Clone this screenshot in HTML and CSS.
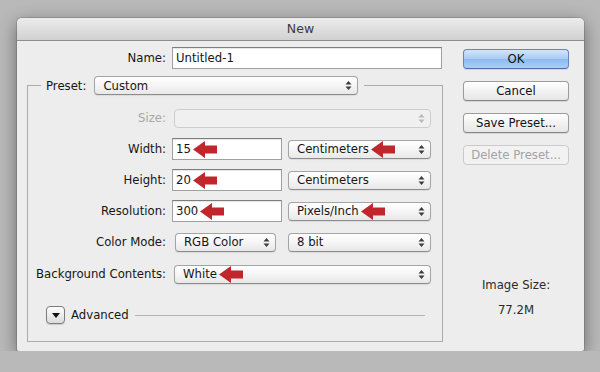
FILE: index.html
```html
<!DOCTYPE html>
<html>
<head>
    <meta charset="utf-8">
    <meta name="viewport" content="width=device-width, initial-scale=1.0">
    <title>New</title>
    <link rel="stylesheet" href="styles.css">
</head>
<body>
    <svg class="defs" xmlns="http://www.w3.org/2000/svg">
        <symbol id="arrow" viewBox="0 0 24 17">
            <path d="M0 8.5 L12 0 V4.5 H24 V12.5 H12 V17 Z"></path>
        </symbol>
        <symbol id="updown" viewBox="0 0 7 11">
            <path d="M0.5 4.5 L3.5 1 L6.5 4.5 Z M0.5 6.5 L3.5 10 L6.5 6.5 Z"></path>
        </symbol>
    </svg>

    <div class="dialog">
        <div class="titlebar">New</div>
        <div class="content">
            <div class="form">
                <div class="name-row">
                    <span class="label">Name:</span>
                    <div class="field name-field">Untitled-1</div>
                </div>
                <fieldset class="preset">
                    <legend>
                        <div class="legend-inner">
                            <span>Preset:</span>
                            <div class="popup preset-popup">Custom<svg class="updown"><use href="#updown"></use></svg></div>
                        </div>
                    </legend>
                    <div class="row disabled">
                        <span class="label">Size:</span>
                        <div class="popup wide"><span></span><svg class="updown"><use href="#updown"></use></svg></div>
                    </div>
                    <div class="row">
                        <span class="label">Width:</span>
                        <div class="field num">15<svg class="arrow"><use href="#arrow"></use></svg></div>
                        <div class="popup unit"><span>Centimeters<svg class="arrow"><use href="#arrow"></use></svg></span><svg class="updown"><use href="#updown"></use></svg></div>
                    </div>
                    <div class="row">
                        <span class="label">Height:</span>
                        <div class="field num">20<svg class="arrow"><use href="#arrow"></use></svg></div>
                        <div class="popup unit"><span>Centimeters</span><svg class="updown"><use href="#updown"></use></svg></div>
                    </div>
                    <div class="row">
                        <span class="label">Resolution:</span>
                        <div class="field num">300<svg class="arrow"><use href="#arrow"></use></svg></div>
                        <div class="popup unit"><span>Pixels/Inch<svg class="arrow"><use href="#arrow"></use></svg></span><svg class="updown"><use href="#updown"></use></svg></div>
                    </div>
                    <div class="row">
                        <span class="label">Color Mode:</span>
                        <div class="popup mode"><span>RGB Color</span><svg class="updown"><use href="#updown"></use></svg></div>
                        <div class="popup unit bits"><span>8 bit</span><svg class="updown"><use href="#updown"></use></svg></div>
                    </div>
                    <div class="row bg-row">
                        <span class="label">Background Contents:</span>
                        <div class="popup wide"><span>White<svg class="arrow"><use href="#arrow"></use></svg></span><svg class="updown"><use href="#updown"></use></svg></div>
                    </div>
                    <div class="advanced">
                        <div class="disclosure"><span class="tri"></span></div>
                        <span>Advanced</span>
                        <div class="rule"></div>
                    </div>
                </fieldset>
            </div>
            <div class="side">
                <div class="btn default">OK</div>
                <div class="btn">Cancel</div>
                <div class="btn">Save Preset...</div>
                <div class="btn off">Delete Preset...</div>
                <div class="image-size">
                    <div>Image Size:</div>
                    <div class="size-value">77.2M</div>
                </div>
            </div>
        </div>
    </div>
</body>
</html>
```

FILE: styles.css
```css
body {
    margin: 0;
    background: #b9b9b9;
    font-family: "DejaVu Sans", sans-serif;
    font-size: 11.7px;
    color: #161616;
}
.defs {
    position: absolute;
    width: 0;
    height: 0;
}
.dialog {
    margin: 18px 0 0 17px;
    width: 567px;
    height: 333px;
    background: #ededed;
    border-radius: 5px 5px 2px 2px;
    box-shadow: 0 5px 18px rgba(0, 0, 0, 0.45), 0 0 0 1px rgba(0, 0, 0, 0.12);
    overflow: hidden;
}
.titlebar {
    height: 22px;
    line-height: 22px;
    border-bottom: 1px solid #8e8e8e;
    background: linear-gradient(#ececec, #d1d1d1);
    text-align: center;
    font-size: 12.5px;
    color: #3a3a3a;
}
.content {
    display: flex;
    padding: 6px 0 0 10px;
}
.form {
    width: 416px;
}
.name-row {
    display: flex;
    align-items: center;
    height: 22px;
}
.label {
    flex: none;
    width: 139px;
    margin-right: 6px;
    text-align: right;
    white-space: nowrap;
}
.preset .label {
    width: 138px;
}
.field {
    display: flex;
    align-items: center;
    height: 22px;
    box-sizing: border-box;
    padding-left: 3px;
    border: 1px solid #a0a0a0;
    border-top-color: #7d7d7d;
    background: #fff;
    box-shadow: inset 0 1px 1px rgba(0, 0, 0, 0.1);
}
.name-field {
    width: 270px;
}
.num {
    width: 110px;
}
.arrow {
    width: 24px;
    height: 17px;
    margin-left: 2px;
    fill: #c1262c;
    flex: none;
    vertical-align: middle;
}
.preset {
    margin: 7px 0 0;
    padding: 12px 0 15px;
    border: 1px solid #ababab;
    width: 416px;
    box-sizing: border-box;
    min-width: 0;
}
.preset legend {
    margin-left: 13px;
    padding: 0 6px 0 5px;
}
.legend-inner {
    display: flex;
    align-items: center;
    gap: 8px;
}
.popup {
    display: flex;
    align-items: center;
    justify-content: space-between;
    height: 19px;
    box-sizing: border-box;
    padding: 0 5px 0 8px;
    border: 1px solid #a4a4a4;
    border-bottom-color: #8c8c8c;
    border-radius: 4px;
    background: linear-gradient(#ffffff, #f5f5f5 50%, #e8e8e8);
    box-shadow: 0 1px 1px rgba(0, 0, 0, 0.08);
    white-space: nowrap;
}
.popup span {
    display: flex;
    align-items: center;
}
.updown {
    width: 7px;
    height: 11px;
    fill: #3c3c3c;
    flex: none;
}
.preset-popup {
    width: 264px;
}
.wide {
    width: 257px;
    margin-left: 2px;
}
.unit {
    width: 143px;
    margin-left: 6px;
}
.mode {
    width: 101px;
    margin-left: 3px;
}
.unit.bits {
    margin-left: 12px;
}
.row {
    display: flex;
    align-items: center;
    height: 22px;
    margin-bottom: 9px;
}
.row.bg-row {
    margin-top: 10px;
}
.disabled .label {
    color: #a8a8a8;
}
.disabled .popup {
    border-color: #cdcdcd;
    background: #f0f0f0;
    box-shadow: none;
}
.disabled .updown {
    fill: #b9b9b9;
}
.advanced {
    display: flex;
    align-items: center;
    height: 22px;
    margin-top: 19px;
    padding-left: 18px;
}
.disclosure {
    display: flex;
    align-items: center;
    justify-content: center;
    width: 19px;
    height: 18px;
    box-sizing: border-box;
    margin-right: 6px;
    border: 1px solid #7c7c7c;
    border-radius: 4px;
    background: linear-gradient(#fdfdfd, #dcdcdc);
    box-shadow: 0 1px 1px rgba(0, 0, 0, 0.15);
}
.tri {
    width: 0;
    height: 0;
    border-left: 4px solid transparent;
    border-right: 4px solid transparent;
    border-top: 5px solid #111;
    margin-top: 1px;
}
.rule {
    flex: 1;
    height: 1px;
    margin: 0 17px 0 6px;
    background: #b3b3b3;
}
.side {
    width: 106px;
    margin-left: 20px;
    padding-top: 2px;
}
.btn {
    height: 20px;
    line-height: 18px;
    box-sizing: border-box;
    margin-bottom: 12px;
    border: 1px solid #9c9c9c;
    border-bottom-color: #858585;
    border-radius: 4px;
    background: linear-gradient(#ffffff, #f3f3f3 50%, #e6e6e6);
    box-shadow: 0 1px 1px rgba(0, 0, 0, 0.1);
    text-align: center;
    color: #111;
}
.btn.default {
    border-color: #6586bb;
    border-bottom-color: #4d6ea6;
    background: linear-gradient(#d3e4fa, #a9cbf4 50%, #8dbbf0 52%, #a9cff7);
}
.btn.off {
    color: #a3a3a3;
    border-color: #cacaca;
    background: #f2f2f2;
    box-shadow: none;
}
.image-size {
    margin-top: 112px;
    line-height: 16px;
    text-align: center;
    color: #2a2a2a;
}
.size-value {
    margin-top: 9px;
}
```
